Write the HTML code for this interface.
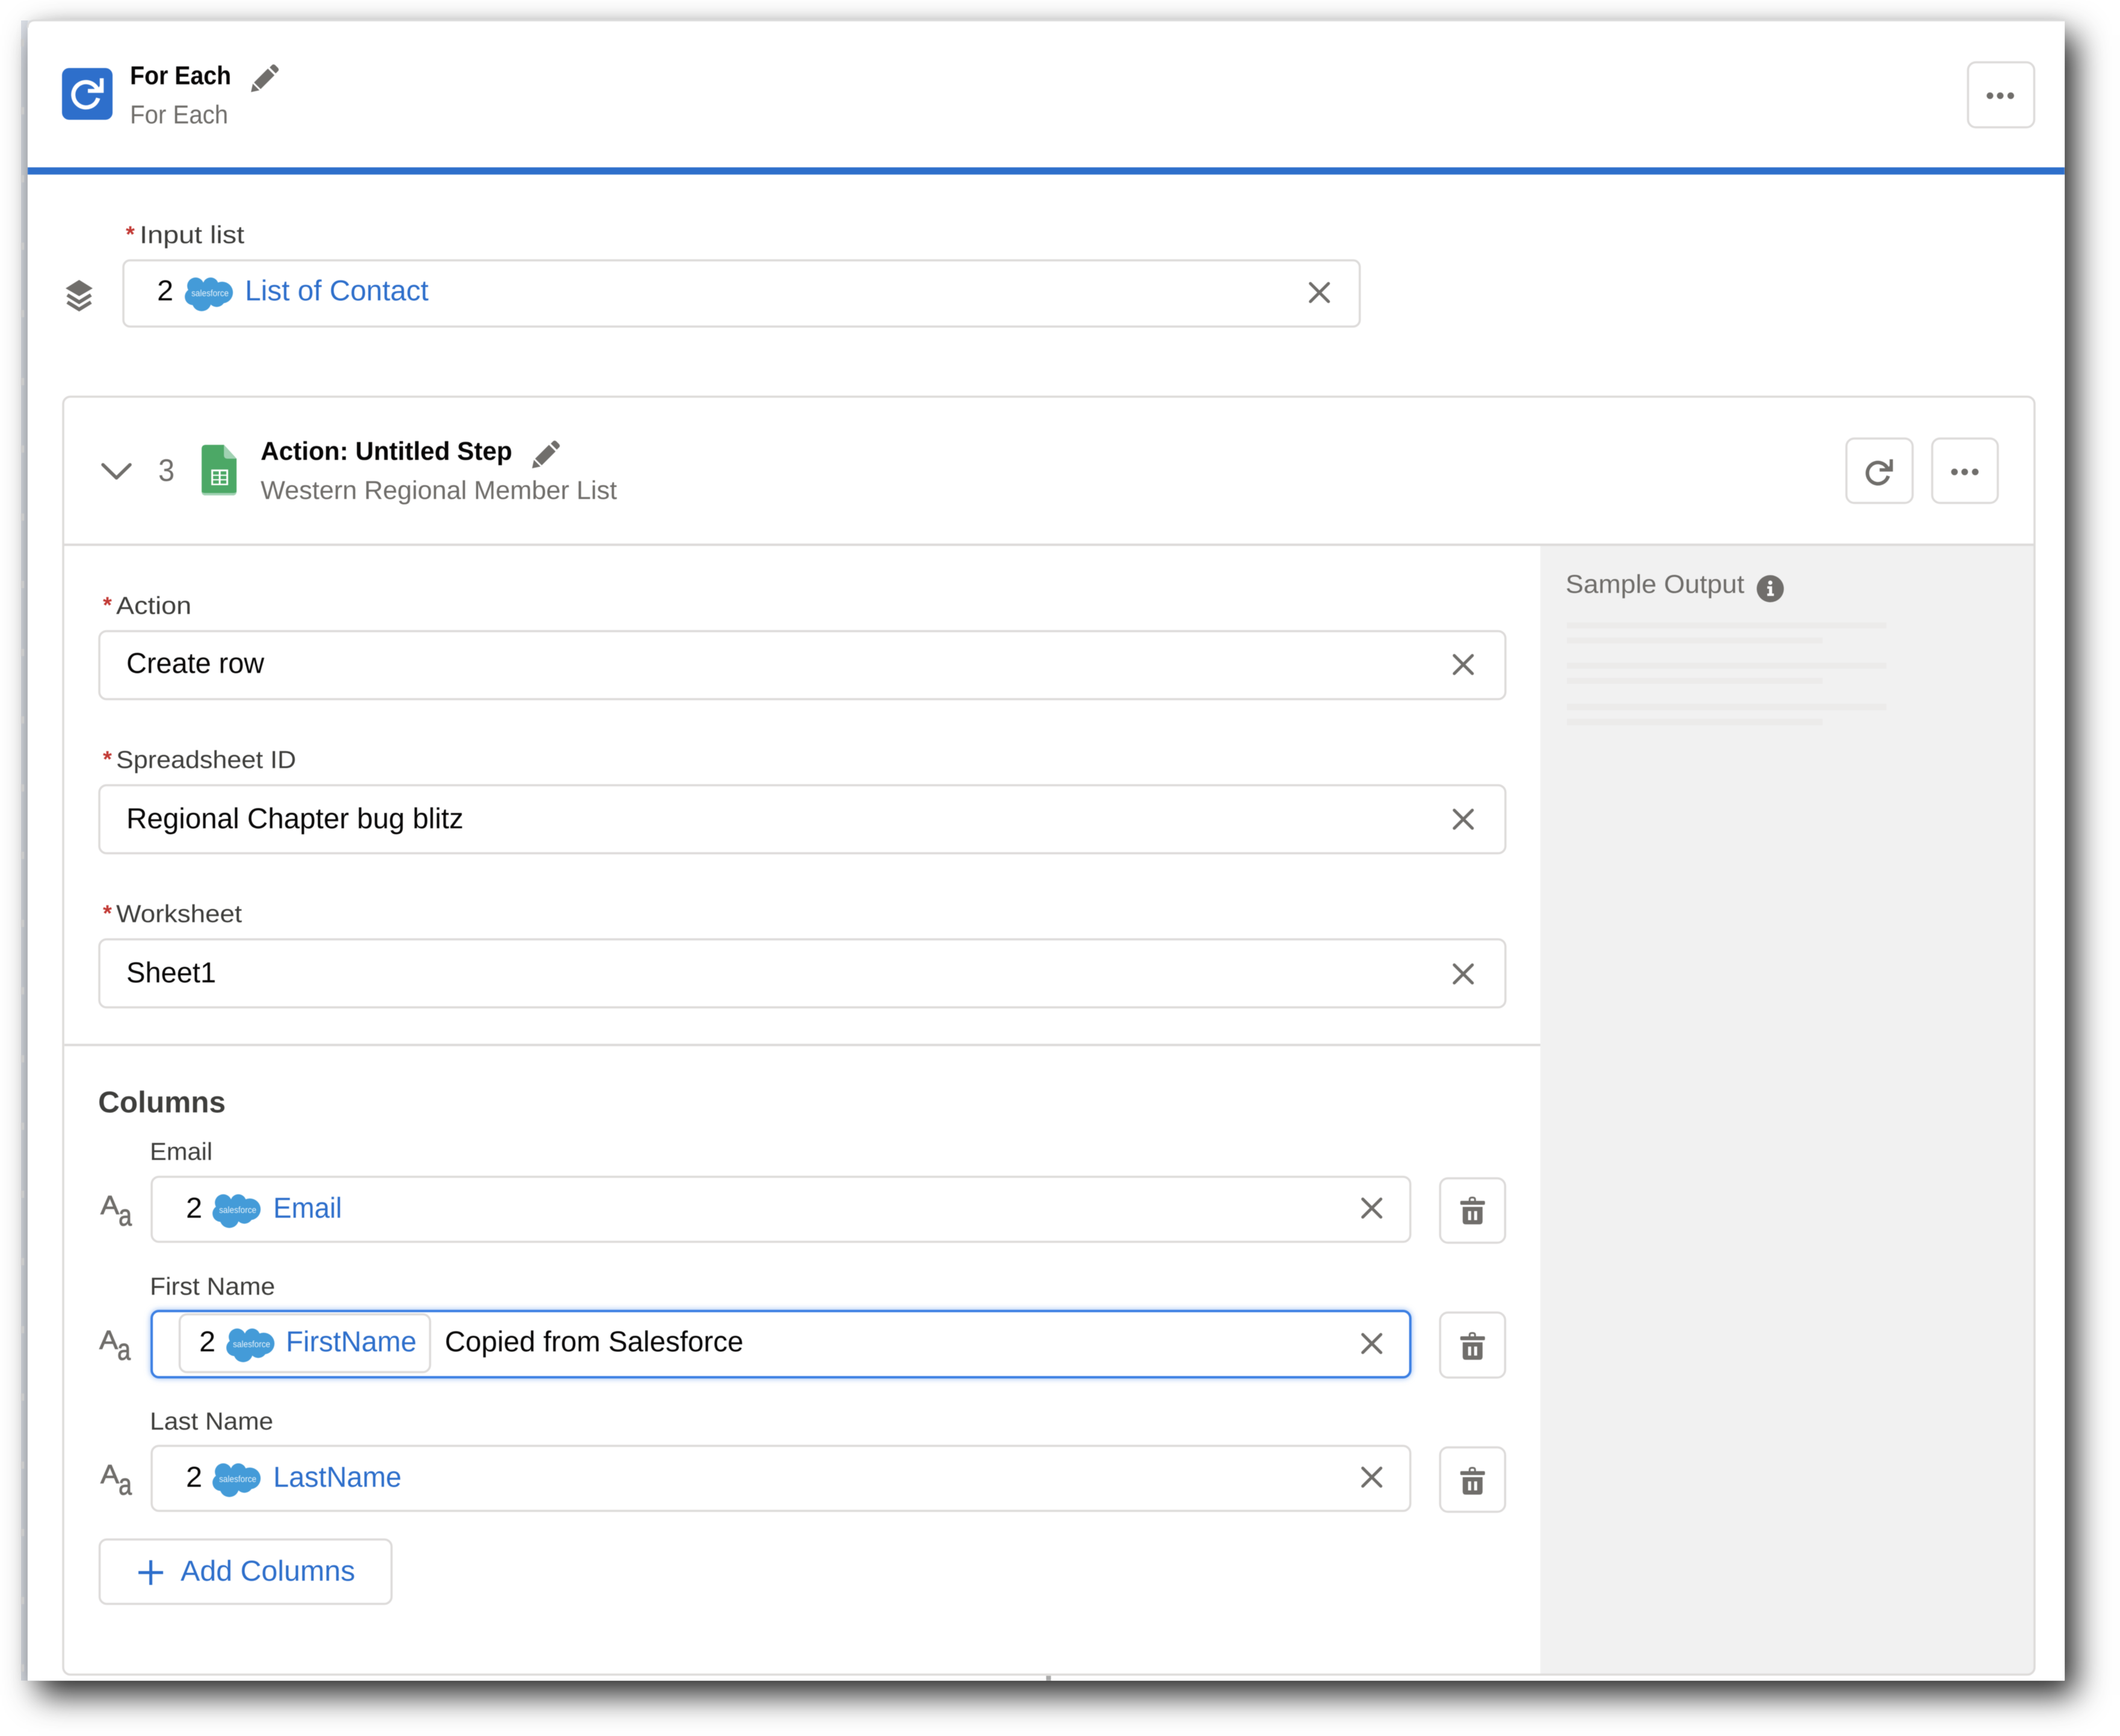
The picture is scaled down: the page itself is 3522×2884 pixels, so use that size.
<!DOCTYPE html>
<html lang="en"><head><meta charset="utf-8"><title>For Each</title>
<style>
html,body{margin:0;padding:0;background:#fff;width:3522px;height:2884px;overflow:hidden}
#shadow{position:absolute;left:46px;top:34px;width:3384px;height:2758px;box-shadow:18px 24px 50px rgba(0,0,0,.85),0 0 22px rgba(0,0,0,.08)}
#strip{position:absolute;left:35px;top:34px;width:30px;height:2758px;background:#dfe3ea}
svg{position:absolute;left:0;top:0;filter:blur(.6px)}
text{font-family:"Liberation Sans",sans-serif;text-rendering:geometricPrecision}
.b{font-weight:700;font-size:43px;fill:#080707}
.s{font-size:43px;fill:#706e6b}
.l{font-size:41px;fill:#3e3e3c}
.v{font-size:48px;fill:#080707}
.a{font-size:48px;fill:#2e6fcb}
.r{font-size:38px;font-weight:700;fill:#c23934}
.f{font-size:15px;fill:#fff;opacity:.85}
.A{font-size:44px;fill:#706e6b;stroke:#706e6b;stroke-width:1}
.aa{font-size:50px;fill:#706e6b;stroke:#706e6b;stroke-width:1}
.box{fill:#fff;stroke:#dddbda;stroke-width:3.5}
</style></head><body>
<div id="strip"></div>
<div id="shadow"></div>
<svg width="3522" height="2884" viewBox="0 0 3522 2884" xmlns="http://www.w3.org/2000/svg">
<defs>
<g id="x"><path d="M-15 -15L15 15M15 -15L-15 15" stroke="#706e6b" stroke-width="5" stroke-linecap="round" fill="none"/></g>
<g id="dots" fill="#706e6b"><circle cx="-17" r="5.5"/><circle r="5.5"/><circle cx="17.5" r="5.5"/></g>
<g id="cloud" fill="#449bd8"><circle cx="18" cy="14" r="14"/><circle cx="43" cy="13" r="13"/><circle cx="62" cy="25" r="18"/><circle cx="14" cy="32" r="14"/><circle cx="28" cy="40" r="16"/><circle cx="53" cy="35" r="14"/><rect x="16" y="12" width="48" height="30"/></g>
<g id="pencil" fill="#706e6b"><path d="M0 46L3 32L14 43Z"/><path d="M5 30L28 7L39 18L16 41Z"/><path d="M31 5L35 1Q37 -1 40 1L45 6Q47 9 45 11L41 15Z"/></g>
<g id="trash" fill="#706e6b"><path d="M2440 1995V1993Q2440 1988 2445 1988H2447Q2452 1988 2452 1993V1995H2449V1993Q2449 1991 2447 1991H2445Q2443 1991 2443 1993V1995Z"/><rect x="2426" y="1995" width="41" height="6.5" rx="2"/><path fill-rule="evenodd" d="M2430 2005H2463V2029Q2463 2034 2458 2034H2435Q2430 2034 2430 2029ZM2439 2012V2027H2444V2012ZM2449 2012V2027H2454V2012Z"/></g>
<g id="refresh" fill="none"><path d="M162 149A21 21 0 1 0 163 163" stroke-width="7"/><path d="M169 130V151H146" stroke-width="6.500" stroke-linejoin="miter"/><path d="M160 151L169 151L169 138Z" fill="currentColor" stroke="none"/></g>
</defs>

<!-- outer card -->
<path d="M46 46Q46 34 58 34H3430V2792H46Z" fill="#fff"/>
<path d="M46 46Q46 34 58 34H3430" fill="none" stroke="#dcdcdc" stroke-width="3"/>
<g fill="#cbcbcb"><rect x="35" y="65" width="5" height="12"/><rect x="35" y="178" width="5" height="12"/><rect x="35" y="291" width="5" height="12"/><rect x="35" y="403" width="5" height="12"/><rect x="35" y="515" width="5" height="12"/><rect x="35" y="628" width="5" height="12"/><rect x="35" y="740" width="5" height="12"/><rect x="35" y="853" width="5" height="12"/><rect x="35" y="965" width="5" height="12"/><rect x="35" y="1078" width="5" height="12"/><rect x="35" y="1190" width="5" height="12"/><rect x="35" y="1303" width="5" height="12"/><rect x="35" y="1415" width="5" height="12"/><rect x="35" y="1528" width="5" height="12"/><rect x="35" y="1640" width="5" height="12"/><rect x="35" y="1753" width="5" height="12"/><rect x="35" y="1865" width="5" height="12"/><rect x="35" y="1978" width="5" height="12"/><rect x="35" y="2090" width="5" height="12"/><rect x="35" y="2203" width="5" height="12"/><rect x="35" y="2315" width="5" height="12"/><rect x="35" y="2428" width="5" height="12"/><rect x="35" y="2540" width="5" height="12"/><rect x="35" y="2653" width="5" height="12"/><rect x="35" y="2765" width="5" height="12"/></g>

<!-- header -->
<rect x="103" y="113" width="84" height="86" rx="12" fill="#2e6fcb"/>
<use href="#refresh" stroke="#fff" color="#fff"/>
<text class="b" x="216" y="140" textLength="168" lengthAdjust="spacingAndGlyphs">For Each</text>
<use href="#pencil" x="417" y="107"/>
<text class="s" x="216" y="205" textLength="163" lengthAdjust="spacingAndGlyphs">For Each</text>
<rect class="box" x="3269.500" y="103.500" width="110" height="108" rx="13"/>
<use href="#dots" x="3323" y="159"/>
<rect x="46" y="278" width="3384" height="12" fill="#2e6fcb"/>

<!-- input list -->
<text class="r" x="209" y="402">*</text>
<text class="l" x="232" y="404" textLength="174" lengthAdjust="spacingAndGlyphs">Input list</text>
<path d="M131.500 465L154 479L131.500 492L109 479Z" fill="#706e6b"/>
<path d="M112 490L131.500 502L151 490M112 502L131.500 514L151 502" fill="none" stroke="#706e6b" stroke-width="6"/>
<rect class="box" x="205" y="432.500" width="2054" height="110" rx="11"/>
<text class="v" x="261" y="499" textLength="27" lengthAdjust="spacingAndGlyphs">2</text>
<use href="#cloud" x="307" y="461"/>
<text class="f" x="318" y="492" textLength="62" lengthAdjust="spacingAndGlyphs">salesforce</text>
<text class="a" x="407" y="499" textLength="305" lengthAdjust="spacingAndGlyphs">List of Contact</text>
<use href="#x" x="2192" y="486"/>

<!-- inner card -->
<path d="M2559 907H3379.500V2770Q3379.500 2782 3367.500 2782H2559Z" fill="#f1f1f1"/>
<rect x="105" y="659" width="3275" height="2123" rx="12" fill="none" stroke="#dddbda" stroke-width="3.500"/>
<rect x="105" y="903" width="3275" height="4" fill="#dddbda"/>
<rect x="107" y="1734" width="2452" height="4" fill="#dddbda"/>
<rect x="1738" y="2784" width="8" height="8" fill="#aaa"/>
<path d="M171 772L193.500 794L216 772" fill="none" stroke="#706e6b" stroke-width="5.500" stroke-linecap="round" stroke-linejoin="round"/>
<text x="263" y="799" textLength="27" lengthAdjust="spacingAndGlyphs" style="font-size:52px;fill:#706e6b">3</text>
<path d="M342 739H372L393 762V816Q393 823 386 823H342Q335 823 335 816V746Q335 739 342 739Z" fill="#4ca866"/>
<path d="M335 816Q335 823 342 823H386Q393 823 393 816Q393 819 386 819H342Q335 819 335 816Z" fill="#a1d2b3"/>
<path d="M372 739L393 762H378Q372 762 372 756Z" fill="#a1d2b3"/>
<path d="M351 780H379V806H351Z" fill="#fff"/>
<g fill="#4ca866"><rect x="354" y="783" width="9.500" height="5.500"/><rect x="366.500" y="783" width="9.500" height="5.500"/><rect x="354" y="790.500" width="9.500" height="5.500"/><rect x="366.500" y="790.500" width="9.500" height="5.500"/><rect x="354" y="798" width="9.500" height="5.500"/><rect x="366.500" y="798" width="9.500" height="5.500"/></g>
<text class="b" x="433" y="764" textLength="418" lengthAdjust="spacingAndGlyphs">Action: Untitled Step</text>
<use href="#pencil" x="884" y="732"/>
<text class="s" x="433" y="829" textLength="592" lengthAdjust="spacingAndGlyphs">Western Regional Member List</text>
<rect class="box" x="3067.500" y="728.500" width="110" height="107" rx="13"/>
<g transform="translate(3100 763) scale(.84) translate(-119 -130)"><use href="#refresh" stroke="#706e6b" color="#706e6b"/></g>
<rect class="box" x="3210" y="728.500" width="109" height="107" rx="13"/>
<use href="#dots" x="3264" y="784"/>

<!-- sample output -->
<text class="s" x="2601" y="985" textLength="297" lengthAdjust="spacingAndGlyphs">Sample Output</text>
<circle cx="2941" cy="978" r="22.500" fill="#706e6b"/>
<circle cx="2941" cy="968" r="3.500" fill="#fff"/><path d="M2936 974H2944V986H2947V990H2936V986H2939V978H2936Z" fill="#fff"/>
<g fill="#ecebea"><rect x="2603" y="1034" width="531" height="10"/><rect x="2603" y="1059" width="425" height="10"/><rect x="2603" y="1101" width="531" height="10"/><rect x="2603" y="1126" width="425" height="10"/><rect x="2603" y="1169" width="531" height="11"/><rect x="2603" y="1194" width="425" height="11"/></g>

<!-- fields -->
<text class="r" x="171" y="1018">*</text>
<text class="l" x="193" y="1020" textLength="125" lengthAdjust="spacingAndGlyphs">Action</text>
<rect class="box" x="165" y="1048.500" width="2336" height="113" rx="12"/>
<text class="v" x="210" y="1118" textLength="229" lengthAdjust="spacingAndGlyphs">Create row</text>
<use href="#x" x="2431" y="1104"/>

<text class="r" x="171" y="1274">*</text>
<text class="l" x="193" y="1276" textLength="299" lengthAdjust="spacingAndGlyphs">Spreadsheet ID</text>
<rect class="box" x="165" y="1304.500" width="2336" height="113" rx="12"/>
<text class="v" x="210" y="1376" textLength="560" lengthAdjust="spacingAndGlyphs">Regional Chapter bug blitz</text>
<use href="#x" x="2431" y="1361"/>

<text class="r" x="171" y="1530">*</text>
<text class="l" x="193" y="1532" textLength="209" lengthAdjust="spacingAndGlyphs">Worksheet</text>
<rect class="box" x="165" y="1560.500" width="2336" height="113" rx="12"/>
<text class="v" x="210" y="1632" textLength="149" lengthAdjust="spacingAndGlyphs">Sheet1</text>
<use href="#x" x="2431" y="1618"/>

<!-- columns -->
<text x="163" y="1848" textLength="212" lengthAdjust="spacingAndGlyphs" style="font-size:50px;font-weight:700;fill:#3e3e3c">Columns</text>

<text class="l" x="249" y="1927" textLength="104" lengthAdjust="spacingAndGlyphs">Email</text>
<text class="A" x="167" y="2017" textLength="31" lengthAdjust="spacingAndGlyphs">A</text>
<text class="aa" x="197" y="2036" textLength="22" lengthAdjust="spacingAndGlyphs">a</text>
<rect class="box" x="252" y="1955" width="2091" height="108" rx="12"/>
<text class="v" x="309" y="2023" textLength="27" lengthAdjust="spacingAndGlyphs">2</text>
<use href="#cloud" x="353" y="1984"/>
<text class="f" x="364" y="2015" textLength="62" lengthAdjust="spacingAndGlyphs">salesforce</text>
<text class="a" x="454" y="2023" textLength="114" lengthAdjust="spacingAndGlyphs">Email</text>
<use href="#x" x="2279" y="2007"/>
<rect class="box" x="2392.500" y="1957.500" width="108" height="107" rx="13"/>
<use href="#trash"/>

<text class="l" x="249" y="2151" textLength="208" lengthAdjust="spacingAndGlyphs">First Name</text>
<text class="A" x="165" y="2241" textLength="31" lengthAdjust="spacingAndGlyphs">A</text>
<text class="aa" x="195" y="2259" textLength="22" lengthAdjust="spacingAndGlyphs">a</text>
<rect x="252" y="2178" width="2091" height="110" rx="12" fill="#fff" stroke="#3d80e3" stroke-width="4" style="filter:drop-shadow(0 0 5px rgba(61,128,227,.55))"/>
<rect class="box" x="298.500" y="2183.500" width="416" height="96" rx="12"/>
<text class="v" x="331" y="2245" textLength="27" lengthAdjust="spacingAndGlyphs">2</text>
<use href="#cloud" x="376" y="2207"/>
<text class="f" x="387" y="2238" textLength="62" lengthAdjust="spacingAndGlyphs">salesforce</text>
<text class="a" x="475" y="2245" textLength="217" lengthAdjust="spacingAndGlyphs">FirstName</text>
<text class="v" x="739" y="2245" textLength="496" lengthAdjust="spacingAndGlyphs">Copied from Salesforce</text>
<use href="#x" x="2279" y="2232"/>
<rect class="box" x="2392.500" y="2180.500" width="108" height="108" rx="13"/>
<use href="#trash" y="225"/>

<text class="l" x="249" y="2375" textLength="205" lengthAdjust="spacingAndGlyphs">Last Name</text>
<text class="A" x="167" y="2464" textLength="31" lengthAdjust="spacingAndGlyphs">A</text>
<text class="aa" x="197" y="2483" textLength="22" lengthAdjust="spacingAndGlyphs">a</text>
<rect class="box" x="252" y="2402" width="2091" height="108" rx="12"/>
<text class="v" x="309" y="2470" textLength="27" lengthAdjust="spacingAndGlyphs">2</text>
<use href="#cloud" x="353" y="2431"/>
<text class="f" x="364" y="2462" textLength="62" lengthAdjust="spacingAndGlyphs">salesforce</text>
<text class="a" x="454" y="2470" textLength="213" lengthAdjust="spacingAndGlyphs">LastName</text>
<use href="#x" x="2279" y="2454"/>
<rect class="box" x="2392.500" y="2404.500" width="108" height="107" rx="13"/>
<use href="#trash" y="449"/>

<rect class="box" x="165.500" y="2557.500" width="485" height="107" rx="12"/>
<path d="M250.500 2592V2633M230 2612.500H271" stroke="#2e6fcb" stroke-width="5" fill="none"/>
<text class="a" x="300" y="2626" textLength="290" lengthAdjust="spacingAndGlyphs">Add Columns</text>
</svg>
</body></html>
